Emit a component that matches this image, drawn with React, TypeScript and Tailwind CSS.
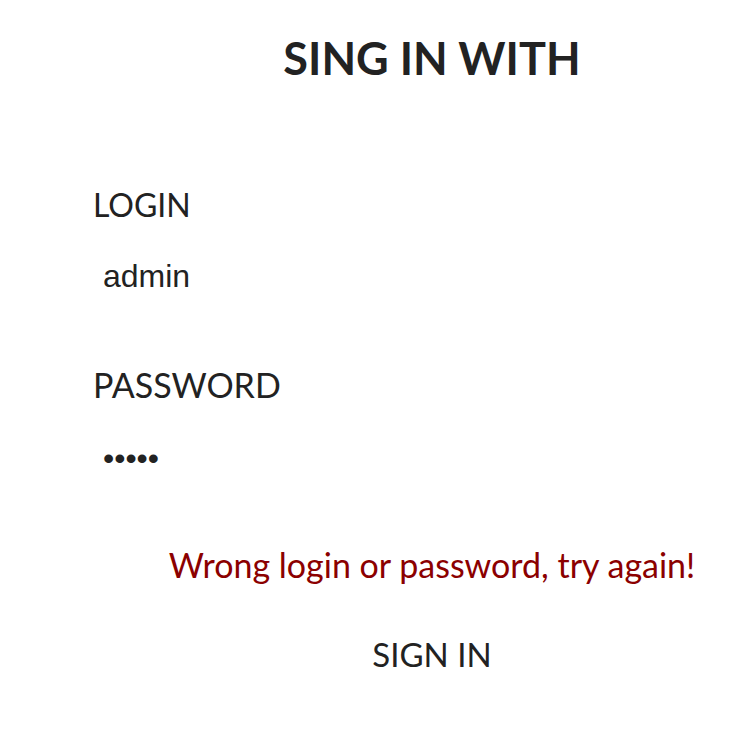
export default function App() {
  return (
    <div className="w-[750px] h-[736px] overflow-hidden bg-white text-[#222] font-['Lato',sans-serif]">
      <div className="pt-[31px] pl-[114px] text-center">
        <h1 className="text-[45px] leading-[54px] font-bold">SING IN WITH</h1>
      </div>
      <form className="mt-[101px]">
        <div className="pl-[93px]">
          <label className="block text-[32px] leading-[38px]">LOGIN</label>
          <input
            type="text"
            defaultValue="admin"
            className="mt-[34px] block h-[36px] w-[400px] pl-[10px] text-[32px] leading-[36px] font-['Liberation_Sans',Arial,sans-serif] outline-none"
          />
          <label className="mt-[72px] block text-[34px] leading-[38px]">PASSWORD</label>
          <input
            type="password"
            defaultValue="admin"
            className="mt-[36px] block h-[36px] w-[400px] pl-[10px] text-[32px] leading-[36px] font-['Liberation_Sans',Arial,sans-serif] outline-none"
          />
        </div>
        <div className="mt-[68px] pl-[114px] text-center">
          <p className="text-[34px] leading-[41px] text-[#8b0000]">Wrong login or password, try again!</p>
          <button type="button" className="mt-[49px] mx-auto block text-[33px] leading-[40px]">SIGN IN</button>
        </div>
      </form>
    </div>
  );
}
